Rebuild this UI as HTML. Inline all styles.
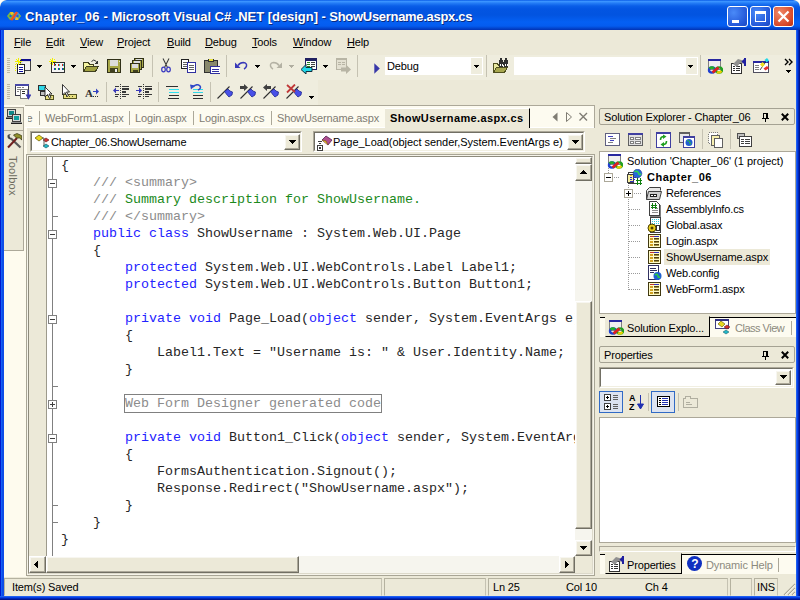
<!DOCTYPE html>
<html><head><meta charset="utf-8"><title>Chapter_06 - Microsoft Visual C# .NET [design]</title>
<style>
*{box-sizing:border-box;margin:0;padding:0}
html,body{width:800px;height:600px;overflow:hidden;background:#fff}
body{position:relative;font-family:"Liberation Sans","DejaVu Sans",sans-serif;font-size:11px;color:#000;letter-spacing:-0.15px}
.abs{position:absolute}
div,span{white-space:nowrap}
#win{position:absolute;left:0;top:0;width:800px;height:600px;background:#ECE9D8;overflow:hidden;border-radius:6px 6px 0 0}
#title{position:absolute;left:0;top:0;width:800px;height:30px;border-radius:7px 7px 0 0;
 background:linear-gradient(#0a5ce8 0,#3a93ff 1.500px,#2078f4 3.500px,#0a5ee8 6px,#0355e2 9px,#0254e0 15px,#0460f4 22px,#045cf0 26px,#0348d2 28px,#0232b4 30px)}
#title .t{position:absolute;left:25px;top:9px;font-weight:bold;font-size:13px;color:#fff;text-shadow:1px 1px 0 #0a2a80;letter-spacing:-0.04px}
.bl{position:absolute;left:0;top:30px;width:4px;height:570px;background:linear-gradient(90deg,#0019cf 0,#0019cf 1px,#1560f5 1px,#1560f5 2px,#0d4de8 2px)}
.br{position:absolute;left:796px;top:30px;width:4px;height:570px;background:linear-gradient(90deg,#2060f0 0,#2060f0 1px,#0540e8 1px,#0540e8 2px,#0028b8 2px,#0028b8 3px,#001590 3px)}
.bb{position:absolute;left:0;top:596px;width:800px;height:4px;background:linear-gradient(#2060f0 0,#2060f0 1px,#0540e8 1px,#0540e8 2px,#0028b8 2px,#0028b8 3px,#001590 3px)}
.cb{position:absolute;top:6px;width:21px;height:21px;border:1px solid #fff;border-radius:3px;background:radial-gradient(circle at 30% 30%,#4a8af8,#2458d8 70%,#1a48c0)}
.cb.x{background:radial-gradient(circle at 30% 30%,#f08868,#d84828 70%,#b83010)}
#menu{position:absolute;left:4px;top:30px;width:792px;height:23px;background:#ECE9D8}
#menu span{position:absolute;top:6px;font-size:11px}
.tb{position:absolute;background:#EFEDDE}
.grip{position:absolute;width:3px;height:16px;background:repeating-linear-gradient(#BDB9A4 0,#BDB9A4 1px,transparent 1px,transparent 2px)}
.sep{position:absolute;width:1px;background:#C5C2B2}
.mono{font-family:"Liberation Mono","DejaVu Sans Mono",monospace}
.combo{position:absolute;background:#fff}
.btn3d{position:absolute;background:#ECE9D8;border:1px solid;border-color:#fff #716F64 #716F64 #fff;box-shadow:inset -1px -1px 0 #ACA899, inset 1px 1px 0 #F7F6F0}
.sunk{position:absolute;border:1px solid;border-color:#ACA899 #fff #fff #ACA899}
.sunk2{position:absolute;border:1px solid;border-color:#716F64 #F1EFE2 #F1EFE2 #716F64}
.ptitle{position:absolute;left:599px;width:196px;height:17px;border:1px solid #A5A293;border-radius:2px;background:#ECE9D8}
.ptitle span{position:absolute;left:4px;top:2px}
.tree span{position:absolute;font-size:11px}
.st{position:absolute;top:578px;height:18px;border:1px solid;border-color:#B5B2A0 #C5C2B2 #ECE9D8 #B5B2A0}
.stt{position:absolute;top:581px}
.code{position:absolute;left:62px;font-family:"Liberation Mono","DejaVu Sans Mono",monospace;font-size:13.333px;line-height:17px;height:17px;white-space:pre;color:#262626;letter-spacing:0}
.k{color:#2222FF}.g{color:#8C8C8C}.c{color:#1C8A1C}
.ob{position:absolute;left:48px;width:9px;height:9px;border:1px solid #808080;background:#fff}
.ob i{position:absolute;left:1px;top:3px;width:5px;height:1px;background:#404040}
.ob b{position:absolute;left:3px;top:1px;width:1px;height:5px;background:#404040}
.tick{position:absolute;left:52px;width:6px;height:1px;background:#808080}
</style></head><body>
<div id="win">
<div id="title"><div class="t"><span style="letter-spacing:0.42px">Chapter_06</span> - Microsoft Visual C# .NET [design] - <span style="letter-spacing:-0.3px">ShowUsername.aspx.cs</span></div>
<svg class="abs" style="left:6px;top:10px" width="16" height="12"><path d="M1 6L4 2H7L9 5L7 10H4Z" fill="#7CB83C"/><path d="M4 2H7L8 4L5 5Z" fill="#F0C020"/><path d="M15 6L12 2H9L7 5L9 10H12Z" fill="#4C90D8"/><path d="M9 10H12L13 8L10 7Z" fill="#F0C020"/><path d="M12 10L15 6L13 4Z" fill="#7CB83C"/><circle cx="4.500" cy="6" r="1.200" fill="#2060D0"/><circle cx="11.500" cy="6" r="1.200" fill="#2060D0"/><path d="M4 10L10 1.500L12 2.500L6.500 10.500Z" fill="#F05020"/></svg>
<div class="cb" style="left:727px"><div class="abs" style="left:4px;top:13px;width:7px;height:3px;background:#fff"></div></div>
<div class="cb" style="left:750px"><div class="abs" style="left:4px;top:4px;width:11px;height:11px;border:1px solid #fff;border-top-width:3px"></div></div>
<div class="cb x" style="left:773px"><svg class="abs" style="left:3px;top:3px" width="13" height="13"><path d="M1.5 1.5L11.5 11.5M11.5 1.5L1.5 11.5" stroke="#fff" stroke-width="2.2"/></svg></div>
</div><div class="bl"></div><div class="br"></div><div class="bb"></div>
<div id="menu">
<span style="left:10px"><u>F</u>ile</span>
<span style="left:42px"><u>E</u>dit</span>
<span style="left:76px"><u>V</u>iew</span>
<span style="left:113px"><u>P</u>roject</span>
<span style="left:163px"><u>B</u>uild</span>
<span style="left:201px"><u>D</u>ebug</span>
<span style="left:248px"><u>T</u>ools</span>
<span style="left:289px"><u>W</u>indow</span>
<span style="left:343px"><u>H</u>elp</span>
</div>
<div class="tb" style="left:5px;top:55px;width:791px;height:25px;border-radius:2px 0 0 0"></div>
<div class="tb" style="left:5px;top:80px;width:313px;height:25px"></div>
<div class="grip" style="left:7px;top:58px"></div><div class="grip" style="left:7px;top:84px"></div>
<svg class="abs" style="left:15px;top:58px" width="16" height="16" viewBox="0 0 16 16" shape-rendering="crispEdges" ><rect x="5" y="1" width="11" height="12" fill="#404040"/><rect x="6" y="2" width="9" height="10" fill="#DCDCDC"/><rect x="5" y="1" width="11" height="2" fill="#10108C"/><rect x="8" y="4" width="7" height="8" fill="#F0F0F0"/><rect x="2" y="6" width="8" height="10" fill="#202020"/><rect x="3" y="7" width="6" height="8" fill="#fff"/><rect x="4" y="9" width="4" height="1" fill="#1010A0"/><rect x="4" y="11" width="4" height="1" fill="#1010A0"/><rect x="4" y="13" width="4" height="1" fill="#1010A0"/><rect x="3" y="0" width="1" height="7" fill="#F0F000"/><rect x="0" y="3" width="7" height="1" fill="#F0F000"/><rect x="1" y="1" width="1" height="1" fill="#F0F000"/><rect x="5" y="1" width="1" height="1" fill="#F0F000"/><rect x="1" y="5" width="1" height="1" fill="#F0F000"/><rect x="5" y="5" width="1" height="1" fill="#F0F000"/><rect x="2" y="2" width="1" height="1" fill="#F0F000"/><rect x="4" y="4" width="1" height="1" fill="#F0F000"/><rect x="0" y="6" width="1" height="1" fill="#F0F000"/><rect x="0" y="8" width="1" height="1" fill="#F0F000"/><rect x="0" y="10" width="1" height="1" fill="#F0F000"/><rect x="0" y="12" width="1" height="1" fill="#F0F000"/></svg>
<svg class="abs" style="left:49px;top:58px" width="16" height="16" viewBox="0 0 16 16" shape-rendering="crispEdges" ><rect x="2" y="4" width="14" height="11" fill="#303030"/><rect x="3" y="5" width="12" height="9" fill="#F4F4F4"/><rect x="5" y="6" width="2" height="2" fill="#D02020"/><rect x="5" y="10" width="2" height="2" fill="#2030D0"/><rect x="9" y="6" width="2" height="2" fill="#D02020"/><rect x="9" y="10" width="2" height="2" fill="#2030D0"/><rect x="13" y="6" width="2" height="2" fill="#D02020"/><rect x="13" y="10" width="2" height="2" fill="#2030D0"/><rect x="6" y="6" width="1" height="2" fill="#20C0C0"/><rect x="6" y="10" width="1" height="2" fill="#20A020"/><rect x="10" y="6" width="1" height="2" fill="#20C0C0"/><rect x="10" y="10" width="1" height="2" fill="#20A020"/><rect x="14" y="6" width="1" height="2" fill="#20C0C0"/><rect x="14" y="10" width="1" height="2" fill="#20A020"/><rect x="3" y="0" width="1" height="7" fill="#F0F000"/><rect x="0" y="3" width="7" height="1" fill="#F0F000"/><rect x="1" y="1" width="1" height="1" fill="#F0F000"/><rect x="5" y="1" width="1" height="1" fill="#F0F000"/><rect x="1" y="5" width="1" height="1" fill="#F0F000"/><rect x="5" y="5" width="1" height="1" fill="#303030"/><rect x="2" y="2" width="1" height="1" fill="#F0F000"/><rect x="4" y="4" width="1" height="1" fill="#303030"/><rect x="6" y="6" width="1" height="1" fill="#303030"/></svg>
<svg class="abs" style="left:83px;top:58px" width="16" height="16" viewBox="0 0 16 16" shape-rendering="crispEdges" ><path d="M0.500 13.500V4.500H5.500L6.500 6.500H10.500V8.500" fill="#F4F4A0" stroke="#404020"/><path d="M0.500 13.500L3.500 8.500H15.500L12.500 13.500Z" fill="#A0A040" stroke="#404020"/><path d="M8.500 3.500Q10.500 0.500 13.500 3.500" fill="none" stroke="#303030" shape-rendering="auto"/><path d="M15 2V5.500H11.500Z" fill="#303030"/></svg>
<svg class="abs" style="left:107px;top:58px" width="16" height="16" viewBox="0 0 16 16" shape-rendering="crispEdges" ><rect x="0" y="1" width="14" height="14" fill="#303018"/><rect x="1" y="2" width="12" height="12" fill="#A8A848"/><rect x="3" y="2" width="8" height="6" fill="#DCDCDC"/><rect x="3" y="10" width="8" height="5" fill="#404020"/><rect x="8" y="11" width="2" height="3" fill="#F0F0F0"/><rect x="12" y="3" width="1" height="1" fill="#E8E8D0"/></svg>
<svg class="abs" style="left:129px;top:58px" width="16" height="16" viewBox="0 0 16 16" shape-rendering="crispEdges" ><rect x="5" y="0" width="10" height="10" fill="#303018"/><rect x="6" y="1" width="8" height="8" fill="#A8A848"/><rect x="7" y="1" width="6" height="4" fill="#DCDCDC"/><rect x="8" y="7" width="5" height="2" fill="#404020"/><rect x="3" y="2" width="10" height="10" fill="#303018"/><rect x="4" y="3" width="8" height="8" fill="#A8A848"/><rect x="5" y="3" width="6" height="4" fill="#DCDCDC"/><rect x="6" y="9" width="5" height="2" fill="#404020"/><rect x="1" y="5" width="10" height="10" fill="#303018"/><rect x="2" y="6" width="8" height="8" fill="#A8A848"/><rect x="3" y="6" width="6" height="4" fill="#DCDCDC"/><rect x="4" y="12" width="5" height="2" fill="#404020"/></svg>
<svg class="abs" style="left:160px;top:58px" width="16" height="16" viewBox="0 0 16 16" shape-rendering="crispEdges" ><g shape-rendering="auto"><path d="M3 0.500L7.500 9.500M9 0.500L4.500 9.500" stroke="#404040" stroke-width="1.100" fill="none"/><ellipse cx="3.500" cy="11.500" rx="1.800" ry="2.300" fill="none" stroke="#3838C0" stroke-width="1.200"/><ellipse cx="8.500" cy="11.500" rx="1.800" ry="2.300" fill="none" stroke="#3838C0" stroke-width="1.200"/></g></svg>
<svg class="abs" style="left:181px;top:58px" width="16" height="16" viewBox="0 0 16 16" shape-rendering="crispEdges" ><rect x="0" y="1" width="8" height="10" fill="#202020"/><rect x="1" y="2" width="6" height="8" fill="#fff"/><rect x="2" y="4" width="4" height="1" fill="#606060"/><rect x="2" y="6" width="4" height="1" fill="#606060"/><rect x="2" y="8" width="4" height="1" fill="#606060"/><rect x="6" y="4" width="9" height="11" fill="#3030A0"/><rect x="7" y="5" width="7" height="9" fill="#fff"/><rect x="8" y="7" width="5" height="1" fill="#606060"/><rect x="8" y="9" width="5" height="1" fill="#606060"/><rect x="8" y="11" width="5" height="1" fill="#606060"/></svg>
<svg class="abs" style="left:204px;top:58px" width="16" height="16" viewBox="0 0 16 16" shape-rendering="crispEdges" ><rect x="0" y="2" width="14" height="13" fill="#303030"/><rect x="1" y="3" width="12" height="11" fill="#88886C"/><rect x="4" y="1" width="6" height="3" fill="#303030"/><rect x="5" y="1" width="4" height="2" fill="#E8E040"/><rect x="6" y="8" width="11" height="8" fill="#3030A0"/><rect x="7" y="9" width="9" height="6" fill="#fff"/><rect x="8" y="11" width="7" height="1" fill="#3030A0"/><rect x="8" y="13" width="7" height="1" fill="#3030A0"/></svg>
<svg class="abs" style="left:235px;top:58px" width="16" height="16" viewBox="0 0 16 16" shape-rendering="crispEdges" ><g shape-rendering="auto" ><path d="M3 7.500Q5 4.500 8.500 4.500Q12 5 11.500 8Q11 10 9 11" fill="none" stroke="#3838B8" stroke-width="1.500"/><path d="M0 4.500V10H5.500Z" fill="#3838B8"/></g></svg>
<svg class="abs" style="left:269px;top:58px" width="16" height="16" viewBox="0 0 16 16" shape-rendering="crispEdges" ><g shape-rendering="auto" transform="translate(13,0) scale(-1,1)"><path d="M3 7.500Q5 4.500 8.500 4.500Q12 5 11.500 8Q11 10 9 11" fill="none" stroke="#B4B2A4" stroke-width="1.500"/><path d="M0 4.500V10H5.500Z" fill="#B4B2A4"/></g></svg>
<svg class="abs" style="left:301px;top:58px" width="16" height="16" viewBox="0 0 16 16" shape-rendering="crispEdges" ><rect x="4" y="0" width="12" height="12" fill="#202060"/><rect x="5" y="3" width="10" height="8" fill="#fff"/><rect x="6" y="4" width="3" height="1" fill="#208020"/><rect x="10" y="4" width="4" height="1" fill="#404040"/><rect x="6" y="6" width="3" height="1" fill="#208020"/><rect x="10" y="6" width="4" height="1" fill="#404040"/><rect x="6" y="8" width="3" height="1" fill="#208020"/><rect x="10" y="8" width="4" height="1" fill="#404040"/><path d="M0 11.5L5 6.5V9.5H11V13.5H5V16Z" fill="#20D8E8" stroke="#103040" stroke-width="1" shape-rendering="auto"/></svg>
<svg class="abs" style="left:335px;top:58px" width="16" height="16" viewBox="0 0 16 16" shape-rendering="crispEdges" ><rect x="1" y="0" width="11" height="12" fill="#B8B5A5"/><rect x="2" y="2" width="9" height="9" fill="#E4E1D2"/><rect x="3" y="4" width="3" height="1" fill="#B8B5A5"/><rect x="7" y="4" width="3" height="1" fill="#B8B5A5"/><rect x="3" y="6" width="3" height="1" fill="#B8B5A5"/><rect x="7" y="6" width="3" height="1" fill="#B8B5A5"/><path d="M16 11.5L11 6.5V9.5H6V13.5H11V16Z" fill="#B8B5A5" shape-rendering="auto"/></svg>
<svg class="abs" style="left:493px;top:58px" width="16" height="16" viewBox="0 0 16 16" shape-rendering="crispEdges" ><path d="M0.5 14.5V5.5H4.5L5.5 7.5H8" fill="#E8E8A0" stroke="#505020"/><path d="M0.5 14.5L3.5 9.5H14.5L11.5 14.5Z" fill="#A8A850" stroke="#505020"/><rect x="6" y="2" width="4" height="7" fill="#303030"/><rect x="11" y="2" width="4" height="7" fill="#303030"/><rect x="7" y="0" width="2" height="2" fill="#303030"/><rect x="12" y="0" width="2" height="2" fill="#303030"/><rect x="10" y="4" width="1" height="3" fill="#303030"/><rect x="7" y="6" width="1" height="2" fill="#fff"/><rect x="9" y="6" width="1" height="2" fill="#fff"/><rect x="12" y="6" width="1" height="2" fill="#fff"/><rect x="14" y="6" width="1" height="2" fill="#fff"/></svg>
<svg class="abs" style="left:707px;top:58px" width="16" height="16" viewBox="0 0 16 16" shape-rendering="crispEdges" ><rect x="1" y="1" width="13" height="11" fill="#808080"/><rect x="2" y="3" width="11" height="8" fill="#F0F0F0"/><rect x="1" y="1" width="13" height="2" fill="#2828A0"/><g shape-rendering="auto" stroke-width="2.400" fill="none"><ellipse cx="5" cy="12" rx="3" ry="2.600" stroke="#2040D0"/><ellipse cx="12" cy="12" rx="3" ry="2.600" stroke="#20A020"/><path d="M2.500 10.500Q5 8.500 7 10.500" stroke="#20B020"/><path d="M10 14Q12.500 15.500 14.500 13" stroke="#E8D000"/><path d="M5.500 14.500L11.500 9.500" stroke="#E02020" stroke-width="2.800"/></g></svg>
<svg class="abs" style="left:730px;top:58px" width="16" height="16" viewBox="0 0 16 16" shape-rendering="crispEdges" ><rect x="1" y="5" width="11" height="11" fill="#303030"/><rect x="2" y="6" width="9" height="9" fill="#fff"/><rect x="3" y="8" width="2" height="1" fill="#303030"/><rect x="6" y="8" width="4" height="1" fill="#303030"/><rect x="3" y="10" width="2" height="1" fill="#303030"/><rect x="6" y="10" width="4" height="1" fill="#303030"/><rect x="3" y="12" width="2" height="1" fill="#303030"/><rect x="6" y="12" width="4" height="1" fill="#303030"/><path d="M3 6L8 1L13 2.500V5.500L10 5L7 9Z" fill="#909090" shape-rendering="auto"/><path d="M14.500 0.500L11.500 3.500L14.500 6.500Z" fill="#2020A0" shape-rendering="auto"/><rect x="14" y="0" width="2" height="8" fill="#2020A0"/></svg>
<svg class="abs" style="left:753px;top:58px" width="16" height="16" viewBox="0 0 16 16" shape-rendering="crispEdges" ><rect x="0" y="3" width="16" height="12" fill="#505060"/><rect x="1" y="5" width="14" height="9" fill="#fff"/><rect x="0" y="3" width="16" height="2" fill="#2828A0"/><rect x="2" y="7" width="4" height="1" fill="#808080"/><rect x="2" y="9" width="4" height="1" fill="#808080"/><rect x="2" y="11" width="4" height="1" fill="#808080"/><g shape-rendering="auto"><path d="M14 2L7 12" stroke="#202020" stroke-width=".8"/><path d="M11.500 2L14 0L16 2.500L13.500 4.500Z" fill="#20D8E8"/><path d="M7 6.500L9.500 4L12 6.500L9.500 9Z" fill="#F0E020"/><path d="M10.500 10.500L14 8L16 10L12.500 12.500Z" fill="#E83030"/></g></svg>
<svg class="abs" style="left:37px;top:65px" width="5" height="3" viewBox="0 0 5 3" shape-rendering="crispEdges" ><rect x="0" y="0" width="5" height="1" fill="#000"/><rect x="1" y="1" width="3" height="1" fill="#000"/><rect x="2" y="2" width="1" height="1" fill="#000"/></svg>
<svg class="abs" style="left:71px;top:65px" width="5" height="3" viewBox="0 0 5 3" shape-rendering="crispEdges" ><rect x="0" y="0" width="5" height="1" fill="#000"/><rect x="1" y="1" width="3" height="1" fill="#000"/><rect x="2" y="2" width="1" height="1" fill="#000"/></svg>
<svg class="abs" style="left:255px;top:65px" width="5" height="3" viewBox="0 0 5 3" shape-rendering="crispEdges" ><rect x="0" y="0" width="5" height="1" fill="#000"/><rect x="1" y="1" width="3" height="1" fill="#000"/><rect x="2" y="2" width="1" height="1" fill="#000"/></svg>
<svg class="abs" style="left:289px;top:65px" width="5" height="3" viewBox="0 0 5 3" shape-rendering="crispEdges" ><rect x="0" y="0" width="5" height="1" fill="#B0AEA0"/><rect x="1" y="1" width="3" height="1" fill="#B0AEA0"/><rect x="2" y="2" width="1" height="1" fill="#B0AEA0"/></svg>
<svg class="abs" style="left:323px;top:65px" width="5" height="3" viewBox="0 0 5 3" shape-rendering="crispEdges" ><rect x="0" y="0" width="5" height="1" fill="#000"/><rect x="1" y="1" width="3" height="1" fill="#000"/><rect x="2" y="2" width="1" height="1" fill="#000"/></svg>
<div class="sep" style="left:152px;top:55px;height:22px"></div>
<div class="sep" style="left:226px;top:55px;height:22px"></div>
<div class="sep" style="left:357px;top:55px;height:22px"></div>
<div class="sep" style="left:486px;top:55px;height:22px"></div>
<div class="sep" style="left:700px;top:55px;height:22px"></div>
<svg class="abs" style="left:374px;top:63px" width="7" height="11"><path d="M0.300 0.300L5.800 5.500L0.300 10.700Z" fill="#3838A8"/></svg>
<div class="combo" style="left:385px;top:57px;width:98px;height:18px"><span class="abs" style="left:2px;top:3px">Debug</span><div class="abs" style="left:86px;top:1px;width:11px;height:16px;background:#EFEDDE"></div></div>
<svg class="abs" style="left:474px;top:65px" width="5" height="3" viewBox="0 0 5 3" shape-rendering="crispEdges" ><rect x="0" y="0" width="5" height="1" fill="#000"/><rect x="1" y="1" width="3" height="1" fill="#000"/><rect x="2" y="2" width="1" height="1" fill="#000"/></svg>
<div class="combo" style="left:514px;top:57px;width:184px;height:18px"><div class="abs" style="left:172px;top:1px;width:11px;height:16px;background:#EFEDDE"></div></div>
<svg class="abs" style="left:688px;top:65px" width="5" height="3" viewBox="0 0 5 3" shape-rendering="crispEdges" ><rect x="0" y="0" width="5" height="1" fill="#000"/><rect x="1" y="1" width="3" height="1" fill="#000"/><rect x="2" y="2" width="1" height="1" fill="#000"/></svg>
<svg class="abs" style="left:784px;top:58px" width="10" height="16" shape-rendering="crispEdges"><path d="M1 1L4 4L1 7M5 1L8 4L5 7" stroke="#000" stroke-width="1.4" fill="none" shape-rendering="auto"/><rect x="2" y="12" width="5" height="1"/><rect x="3" y="13" width="3" height="1"/><rect x="4" y="14" width="1" height="1"/></svg>
<svg class="abs" style="left:15px;top:84px" width="16" height="16" viewBox="0 0 16 16" shape-rendering="crispEdges" ><rect x="0" y="0" width="14" height="12" fill="#383848"/><rect x="1" y="2" width="12" height="9" fill="#fff"/><rect x="0" y="0" width="14" height="2" fill="#4848A8"/><rect x="2" y="3" width="4" height="1" fill="#808080"/><rect x="7" y="3" width="2" height="1" fill="#808080"/><rect x="2" y="5" width="3" height="1" fill="#808080"/><rect x="2" y="7" width="2" height="1" fill="#808080"/><rect x="5" y="5" width="8" height="10" fill="#808080"/><rect x="6" y="6" width="6" height="8" fill="#fff"/><rect x="7" y="7" width="3" height="1" fill="#303030"/><rect x="7" y="9" width="3" height="1" fill="#303030"/><path d="M13.500 6V12M11.500 11L13.500 14.500L15.500 11Z" stroke="#3838B0" fill="#3838B0" stroke-width="1.200" shape-rendering="auto"/></svg>
<svg class="abs" style="left:38px;top:84px" width="16" height="16" viewBox="0 0 16 16" shape-rendering="crispEdges" ><rect x="0" y="1" width="8" height="6" fill="#303030"/><rect x="1" y="2" width="6" height="4" fill="#30D8E8"/><rect x="2" y="7" width="7" height="5" fill="#303030"/><rect x="3" y="8" width="5" height="3" fill="#C0C0C0"/><rect x="7" y="11" width="9" height="5" fill="#505020"/><rect x="8" y="12" width="7" height="3" fill="#E8E080"/><path d="M7 3V13L9.5 10.5L11.5 14.5L13 13.5L11 10H14Z" fill="#fff" stroke="#202020" stroke-width=".9" shape-rendering="auto"/></svg>
<svg class="abs" style="left:61px;top:84px" width="16" height="16" viewBox="0 0 16 16" shape-rendering="crispEdges" ><rect x="2" y="10" width="14" height="5" fill="#505020"/><rect x="3" y="11" width="12" height="3" fill="#E8E080"/><rect x="5" y="12" width="1" height="1" fill="#505020"/><rect x="8" y="12" width="1" height="1" fill="#505020"/><rect x="11" y="12" width="1" height="1" fill="#505020"/><path d="M1.5 0.5V11L4 8.5L6 12.5L7.5 11.5L5.5 8H8.5Z" fill="#fff" stroke="#202020" stroke-width=".9" shape-rendering="auto"/></svg>
<svg class="abs" style="left:85px;top:84px" width="16" height="16" viewBox="0 0 16 16" shape-rendering="crispEdges" ><text x="0" y="13" font-family="Liberation Serif,serif" font-weight="bold" font-size="11" fill="#303030" shape-rendering="auto" letter-spacing="0">A</text><rect x="8" y="7" width="5" height="1" fill="#3040C0"/><path d="M11 4.500L14 7.500L11 10.500Z" fill="#3040C0" shape-rendering="auto"/><rect x="8" y="12" width="1" height="1" fill="#303030"/><rect x="10" y="12" width="1" height="1" fill="#303030"/><rect x="12" y="12" width="1" height="1" fill="#303030"/></svg>
<svg class="abs" style="left:113px;top:84px" width="16" height="16" viewBox="0 0 16 16" shape-rendering="crispEdges" ><rect x="7" y="0" width="1" height="1" fill="#383838"/><rect x="7" y="2" width="1" height="1" fill="#383838"/><rect x="7" y="4" width="1" height="1" fill="#383838"/><rect x="7" y="6" width="1" height="1" fill="#383838"/><rect x="7" y="8" width="1" height="1" fill="#383838"/><rect x="7" y="10" width="1" height="1" fill="#383838"/><rect x="7" y="12" width="1" height="1" fill="#383838"/><rect x="7" y="14" width="1" height="1" fill="#383838"/><rect x="2" y="2" width="4" height="1" fill="#383838"/><rect x="9" y="2" width="7" height="1" fill="#383838"/><rect x="9" y="4" width="7" height="2" fill="#383838"/><rect x="9" y="7" width="4" height="2" fill="#383838"/><rect x="2" y="10" width="4" height="1" fill="#383838"/><rect x="9" y="10" width="7" height="1" fill="#383838"/><rect x="2" y="12" width="3" height="1" fill="#383838"/><rect x="9" y="12" width="4" height="1" fill="#383838"/><rect x="1" y="6" width="5" height="1" fill="#3838B8"/><path d="M3 3.500L0 6.500L3 9.500Z" fill="#3838B8" shape-rendering="auto"/></svg>
<svg class="abs" style="left:136px;top:84px" width="16" height="16" viewBox="0 0 16 16" shape-rendering="crispEdges" ><rect x="7" y="0" width="1" height="1" fill="#383838"/><rect x="7" y="2" width="1" height="1" fill="#383838"/><rect x="7" y="4" width="1" height="1" fill="#383838"/><rect x="7" y="6" width="1" height="1" fill="#383838"/><rect x="7" y="8" width="1" height="1" fill="#383838"/><rect x="7" y="10" width="1" height="1" fill="#383838"/><rect x="7" y="12" width="1" height="1" fill="#383838"/><rect x="7" y="14" width="1" height="1" fill="#383838"/><rect x="2" y="2" width="4" height="1" fill="#383838"/><rect x="9" y="2" width="7" height="1" fill="#383838"/><rect x="9" y="4" width="7" height="2" fill="#383838"/><rect x="9" y="7" width="4" height="2" fill="#383838"/><rect x="2" y="10" width="4" height="1" fill="#383838"/><rect x="9" y="10" width="7" height="1" fill="#383838"/><rect x="2" y="12" width="3" height="1" fill="#383838"/><rect x="9" y="12" width="4" height="1" fill="#383838"/><rect x="0" y="6" width="5" height="1" fill="#3838B8"/><path d="M3 3.500L6 6.500L3 9.500Z" fill="#3838B8" shape-rendering="auto"/></svg>
<svg class="abs" style="left:166px;top:84px" width="16" height="16" viewBox="0 0 16 16" shape-rendering="crispEdges" ><rect x="0" y="2" width="12" height="1" fill="#303030"/><rect x="3" y="5" width="10" height="1" fill="#30E0F0"/><rect x="3" y="8" width="10" height="1" fill="#30E0F0"/><rect x="3" y="11" width="10" height="1" fill="#303030"/><rect x="2" y="14" width="11" height="1" fill="#303030"/></svg>
<svg class="abs" style="left:189px;top:84px" width="16" height="16" viewBox="0 0 16 16" shape-rendering="crispEdges" ><rect x="4" y="5" width="10" height="1" fill="#30D8E8"/><rect x="4" y="8" width="10" height="1" fill="#30D8E8"/><rect x="4" y="11" width="10" height="1" fill="#303030"/><rect x="4" y="14" width="10" height="1" fill="#303030"/><g shape-rendering="auto"><path d="M4 3Q8 -1 11 2Q12.5 4.5 9 6" fill="none" stroke="#3048C8" stroke-width="1.5"/><path d="M1 0.5L6 1.5L2 5.5Z" fill="#3048C8"/></g></svg>
<svg class="abs" style="left:217px;top:84px" width="16" height="16" viewBox="0 0 16 16" shape-rendering="crispEdges" ><g shape-rendering="auto"><path d="M0.500 14.500L12.500 2.500" stroke="#303030" stroke-width="1.100"/><path d="M7.500 7.500L11 5L13 7L15.500 8L15 11L12 13L10.500 11.500Z" fill="#4850E8" stroke="#202890" stroke-width=".8"/></g></svg>
<svg class="abs" style="left:240px;top:84px" width="16" height="16" viewBox="0 0 16 16" shape-rendering="crispEdges" ><g shape-rendering="auto"><path d="M0.500 14.500L12.500 2.500" stroke="#303030" stroke-width="1.100"/><path d="M7.500 7.500L11 5L13 7L15.500 8L15 11L12 13L10.500 11.500Z" fill="#4850E8" stroke="#202890" stroke-width=".8"/><path d="M0 2H4V0L8 3.500L4 7V5H0Z" fill="#404040"/></g></svg>
<svg class="abs" style="left:263px;top:84px" width="16" height="16" viewBox="0 0 16 16" shape-rendering="crispEdges" ><g shape-rendering="auto"><path d="M0.500 14.500L12.500 2.500" stroke="#303030" stroke-width="1.100"/><path d="M7.500 7.500L11 5L13 7L15.500 8L15 11L12 13L10.500 11.500Z" fill="#4850E8" stroke="#202890" stroke-width=".8"/><path d="M8 2H4V0L0 3.500L4 7V5H8Z" fill="#404040"/></g></svg>
<svg class="abs" style="left:286px;top:84px" width="16" height="16" viewBox="0 0 16 16" shape-rendering="crispEdges" ><g shape-rendering="auto"><path d="M0.500 14.500L12.500 2.500" stroke="#303030" stroke-width="1.100"/><path d="M7.500 7.500L11 5L13 7L15.500 8L15 11L12 13L10.500 11.500Z" fill="#4850E8" stroke="#202890" stroke-width=".8"/><path d="M1 1L9 8M9 0.500L1 8.500" stroke="#C03838" stroke-width="1.800"/></g></svg>
<div class="sep" style="left:106px;top:82px;height:20px"></div>
<div class="sep" style="left:158px;top:82px;height:20px"></div>
<div class="sep" style="left:210px;top:82px;height:20px"></div>
<svg class="abs" style="left:309px;top:96px" width="5" height="3" viewBox="0 0 5 3" shape-rendering="crispEdges" ><rect x="0" y="0" width="5" height="1" fill="#000"/><rect x="1" y="1" width="3" height="1" fill="#000"/><rect x="2" y="2" width="1" height="1" fill="#000"/></svg>
<div class="abs" style="left:4px;top:105px;width:23px;height:472px;background:#FEFBEE"></div>
<div class="abs" style="left:4px;top:107px;width:20px;height:144px;background:#ECE9D8;border:1px solid #ACA899;border-left:0"></div>
<div class="abs" style="left:4px;top:130px;width:19px;height:1px;background:#ACA899"></div>
<svg class="abs" style="left:6px;top:109px" width="16" height="16" viewBox="0 0 16 16" shape-rendering="crispEdges" ><rect x="1" y="0" width="9" height="8" fill="#404040"/><rect x="2" y="1" width="7" height="6" fill="#D8D8D8"/><rect x="3" y="2" width="5" height="4" fill="#108888"/><rect x="0" y="8" width="11" height="2" fill="#808080"/><rect x="0" y="9" width="11" height="1" fill="#202020"/><rect x="6" y="5" width="9" height="8" fill="#404040"/><rect x="7" y="6" width="7" height="6" fill="#D8D8D8"/><rect x="8" y="7" width="5" height="4" fill="#10A0A0"/><rect x="5" y="13" width="11" height="2" fill="#909090"/><rect x="5" y="14" width="11" height="1" fill="#202020"/></svg>
<svg class="abs" style="left:6px;top:133px" width="16" height="16" viewBox="0 0 16 16" shape-rendering="crispEdges" ><g shape-rendering="auto"><path d="M14.500 14.500L5 5.500" stroke="#585858" stroke-width="2.200"/><path d="M1.500 2.500Q1 6 4.500 6.500L6 5L4 4.500L3.500 2.500L5 1.500Q3 0.500 1.500 2.500Z" fill="#484848"/><path d="M2 14.500L11 5" stroke="#702020" stroke-width="2"/><path d="M7.500 2L11 0.500L15.500 2.500L16 7L13.500 5L10.500 5Z" fill="#90902C" stroke="#303010" stroke-width=".7"/></g></svg>
<div class="abs" style="left:6px;top:156px;width:14px;height:44px;writing-mode:vertical-rl;font-size:11px;color:#6E6C5E;line-height:14px;letter-spacing:0.25px">Toolbox</div>
<div class="abs" style="left:25px;top:105px;width:570px;height:23px;background:#FDFBF0;border-top:1px solid #ACA899;border-right:1px solid #ACA899"></div>
<div class="abs" style="left:25px;top:127px;width:569px;height:1px;background:#fff"></div>
<div class="abs" style="left:385px;top:108px;width:145px;height:20px;background:#ECE9D8;border-right:1px solid #000;border-top:1px solid #fff"></div>
<div class="abs" style="left:28px;top:112px;width:6px;height:14px;overflow:hidden"><span class="abs tabt" style="left:-1.500px;top:0;color:#7F7C73">e</span></div>
<span class="abs tabt" style="left:45px;top:112px;color:#7F7C73">WebForm1.aspx</span>
<span class="abs tabt" style="left:135px;top:112px;color:#7F7C73">Login.aspx</span>
<span class="abs tabt" style="left:199px;top:112px;color:#7F7C73">Login.aspx.cs</span>
<span class="abs tabt" style="left:277px;top:112px;color:#7F7C73">ShowUsername.aspx</span>
<div class="abs" style="left:39px;top:111px;width:1px;height:14px;background:#ACA899"></div>
<div class="abs" style="left:129px;top:111px;width:1px;height:14px;background:#ACA899"></div>
<div class="abs" style="left:193px;top:111px;width:1px;height:14px;background:#ACA899"></div>
<div class="abs" style="left:271px;top:111px;width:1px;height:14px;background:#ACA899"></div>
<span class="abs tabt" style="left:390px;top:112px;font-weight:bold;letter-spacing:0.38px">ShowUsername.aspx.cs</span>
<svg class="abs" style="left:551px;top:112px" width="40" height="10"><path d="M6.5 0.5V9.5L1.5 5Z" fill="#7F7C73"/><path d="M15.5 0.5V9.5L20.5 5Z" fill="none" stroke="#7F7C73"/><path d="M28.5 1L36 8.5M36 1L28.5 8.5" stroke="#7F7C73" stroke-width="1.4"/></svg>
<div class="abs" style="left:30px;top:131px;width:272px;height:21px;background:#fff;border:1px solid;border-color:#ACA899 #fff #fff #ACA899"><div class="abs" style="left:0;top:0;right:0;bottom:0;border:1px solid;border-color:#716F64 #F1EFE2 #F1EFE2 #716F64"></div><div class="btn3d" style="right:1px;top:2px;width:16px;height:16px"></div></div><svg class="abs" style="left:289px;top:140px" width="7" height="4" viewBox="0 0 7 4" shape-rendering="crispEdges" ><rect x="0" y="0" width="7" height="1" fill="#000"/><rect x="1" y="1" width="5" height="1" fill="#000"/><rect x="2" y="2" width="3" height="1" fill="#000"/><rect x="3" y="3" width="1" height="1" fill="#000"/></svg>
<div class="abs" style="left:313px;top:131px;width:272px;height:21px;background:#fff;border:1px solid;border-color:#ACA899 #fff #fff #ACA899"><div class="abs" style="left:0;top:0;right:0;bottom:0;border:1px solid;border-color:#716F64 #F1EFE2 #F1EFE2 #716F64"></div><div class="btn3d" style="right:1px;top:2px;width:16px;height:16px"></div></div><svg class="abs" style="left:572px;top:140px" width="7" height="4" viewBox="0 0 7 4" shape-rendering="crispEdges" ><rect x="0" y="0" width="7" height="1" fill="#000"/><rect x="1" y="1" width="5" height="1" fill="#000"/><rect x="2" y="2" width="3" height="1" fill="#000"/><rect x="3" y="3" width="1" height="1" fill="#000"/></svg>
<svg class="abs" style="left:34px;top:134px" width="16" height="16" viewBox="0 0 16 16" shape-rendering="crispEdges" ><g shape-rendering="auto"><path d="M1 4L5 1L9 4L5 7Z" fill="#E8D820" stroke="#605000" stroke-width=".7"/><path d="M9 6L12 4L15 6L12 8Z" fill="#D03030" stroke="#601010" stroke-width=".6"/><path d="M9 12L12 10L15 12L12 14Z" fill="#20B8C8" stroke="#105060" stroke-width=".6"/><path d="M8 4H10V12" fill="none" stroke="#606060"/></g></svg>
<span class="abs" style="left:51px;top:136px">Chapter_06.ShowUsername</span>
<svg class="abs" style="left:317px;top:135px" width="16" height="16" viewBox="0 0 16 16" shape-rendering="crispEdges" ><g shape-rendering="auto"><path d="M5 5L9 1L15 5L11 10Z" fill="#B05090" stroke="#401040" stroke-width=".7"/><path d="M5 5L9 6L11 10" fill="#E8C030" stroke="#604000" stroke-width=".5"/></g><rect x="1" y="6" width="4" height="1" fill="#404040"/><rect x="2" y="8" width="2" height="1" fill="#404040"/><rect x="0" y="10" width="6" height="6" fill="#404040"/><rect x="1" y="11" width="4" height="4" fill="#fff"/><rect x="2" y="12" width="2" height="2" fill="#404040"/></svg>
<span class="abs" style="left:333px;top:136px;letter-spacing:-0.05px">Page_Load(object sender,System.EventArgs e)</span>
<div class="abs" style="left:26px;top:154px;width:569px;height:422px;border:1px solid #A8A595;background:#F6F4EA"></div>
<div class="abs" style="left:28px;top:156px;width:565px;height:418px;border:1px solid;border-color:#8E8B7C #DCD9CA #DCD9CA #8E8B7C;background:#fff"></div>
<div class="abs" style="left:29px;top:157px;width:17px;height:399px;background:#ECE9D8"></div>
<div class="abs" style="left:46px;top:157px;width:1px;height:399px;background:#9D9A8C"></div>
<div class="abs" style="left:52px;top:157px;width:1px;height:399px;background:#808080"></div>
<div class="abs" style="left:29px;top:157px;width:546px;height:399px;overflow:hidden">
<div class="code" style="left:32px;top:0px">{</div>
<div class="code" style="left:64px;top:17px"><span class="g">/// &lt;summary&gt;</span></div>
<div class="code" style="left:64px;top:34px"><span class="g">/// </span><span class="c">Summary description for ShowUsername.</span></div>
<div class="code" style="left:64px;top:51px"><span class="g">/// &lt;/summary&gt;</span></div>
<div class="code" style="left:64px;top:68px"><span class="k">public</span> <span class="k">class</span> ShowUsername : System.Web.UI.Page</div>
<div class="code" style="left:64px;top:85px">{</div>
<div class="code" style="left:96px;top:102px"><span class="k">protected</span> System.Web.UI.WebControls.Label Label1;</div>
<div class="code" style="left:96px;top:119px"><span class="k">protected</span> System.Web.UI.WebControls.Button Button1;</div>
<div class="code" style="left:96px;top:153px"><span class="k">private</span> <span class="k">void</span> Page_Load(<span class="k">object</span> sender, System.EventArgs e)</div>
<div class="code" style="left:96px;top:170px">{</div>
<div class="code" style="left:128px;top:187px">Label1.Text = "Username is: " &amp; User.Identity.Name;</div>
<div class="code" style="left:96px;top:204px">}</div>
<div class="code" style="left:96px;top:238px"><span class="g" style="display:inline-block;height:17px;line-height:17px;outline:1px solid #808080;outline-offset:0px;vertical-align:top">Web Form Designer generated code</span></div>
<div class="code" style="left:96px;top:272px"><span class="k">private</span> <span class="k">void</span> Button1_Click(<span class="k">object</span> sender, System.EventArgs e)</div>
<div class="code" style="left:96px;top:289px">{</div>
<div class="code" style="left:128px;top:306px">FormsAuthentication.Signout();</div>
<div class="code" style="left:128px;top:323px">Response.Redirect("ShowUsername.aspx");</div>
<div class="code" style="left:96px;top:340px">}</div>
<div class="code" style="left:64px;top:357px">}</div>
<div class="code" style="left:32px;top:374px">}</div>
</div>
<div class="ob" style="top:179px"><i></i></div>
<div class="ob" style="top:230px"><i></i></div>
<div class="ob" style="top:315px"><i></i></div>
<div class="ob" style="top:400px"><i></i><b></b></div>
<div class="ob" style="top:434px"><i></i></div>
<div class="tick" style="top:216px"></div>
<div class="tick" style="top:386px"></div>
<div class="tick" style="top:505px"></div>
<div class="tick" style="top:522px"></div>
<div class="abs" style="left:575px;top:157px;width:17px;height:399px;background:#F6F5EE"></div>
<div class="btn3d" style="left:575px;top:157px;width:17px;height:7px"></div>
<div class="btn3d" style="left:575px;top:164px;width:17px;height:17px"></div>
<svg class="abs" style="left:580px;top:170px" width="7" height="4" shape-rendering="crispEdges"><rect x="3" y="0" width="1" height="1"/><rect x="2" y="1" width="3" height="1"/><rect x="1" y="2" width="5" height="1"/><rect x="0" y="3" width="7" height="1"/></svg>
<div class="btn3d" style="left:575px;top:301px;width:17px;height:228px"></div>
<div class="btn3d" style="left:575px;top:540px;width:17px;height:16px"></div>
<svg class="abs" style="left:580px;top:546px" width="7" height="4" shape-rendering="crispEdges"><rect x="0" y="0" width="7" height="1"/><rect x="1" y="1" width="5" height="1"/><rect x="2" y="2" width="3" height="1"/><rect x="3" y="3" width="1" height="1"/></svg>
<div class="abs" style="left:29px;top:556px;width:546px;height:17px;background:#F6F5EE"></div>
<div class="btn3d" style="left:29px;top:556px;width:17px;height:17px"></div>
<svg class="abs" style="left:34px;top:561px" width="4" height="7" shape-rendering="crispEdges"><rect x="3" y="0" width="1" height="7"/><rect x="2" y="1" width="1" height="5"/><rect x="1" y="2" width="1" height="3"/><rect x="0" y="3" width="1" height="1"/></svg>
<div class="btn3d" style="left:46px;top:556px;width:253px;height:17px"></div>
<div class="btn3d" style="left:559px;top:556px;width:16px;height:17px"></div>
<svg class="abs" style="left:565px;top:561px" width="4" height="7" shape-rendering="crispEdges"><rect x="0" y="0" width="1" height="7"/><rect x="1" y="1" width="1" height="5"/><rect x="2" y="2" width="1" height="3"/><rect x="3" y="3" width="1" height="1"/></svg>
<div class="abs" style="left:575px;top:556px;width:17px;height:17px;background:#ECE9D8"></div>
<div class="ptitle" style="top:108px"><span>Solution Explorer - Chapter_06</span></div><svg class="abs" style="left:762px;top:113px" width="7" height="9" viewBox="0 0 7 9" shape-rendering="crispEdges" ><rect x="1" y="0" width="4" height="1" fill="#000"/><rect x="1" y="0" width="1" height="5" fill="#000"/><rect x="4" y="0" width="2" height="5" fill="#000"/><rect x="0" y="5" width="7" height="1" fill="#000"/><rect x="3" y="6" width="1" height="3" fill="#000"/></svg><svg class="abs" style="left:781px;top:113px" width="8" height="8"><path d="M0.800 0.800L7.200 7.200M7.200 0.800L0.800 7.200" stroke="#000" stroke-width="2"/></svg>
<svg class="abs" style="left:605px;top:132px" width="16" height="16" viewBox="0 0 16 16" shape-rendering="crispEdges" ><rect x="0" y="1" width="15" height="13" fill="#606080"/><rect x="1" y="2" width="13" height="11" fill="#fff"/><rect x="3" y="4" width="5" height="1" fill="#4040C0"/><rect x="5" y="6" width="6" height="1" fill="#808080"/><rect x="5" y="8" width="4" height="1" fill="#4040C0"/><rect x="3" y="10" width="5" height="1" fill="#808080"/></svg>
<svg class="abs" style="left:628px;top:132px" width="16" height="16" viewBox="0 0 16 16" shape-rendering="crispEdges" ><rect x="0" y="1" width="15" height="13" fill="#606060"/><rect x="1" y="3" width="13" height="10" fill="#E0E0E0"/><rect x="0" y="1" width="15" height="2" fill="#4040A0"/><rect x="2" y="5" width="4" height="3" fill="#808080"/><rect x="7" y="5" width="6" height="3" fill="#808080"/><rect x="2" y="9" width="4" height="3" fill="#808080"/><rect x="7" y="9" width="6" height="3" fill="#808080"/><rect x="3" y="6" width="2" height="1" fill="#fff"/><rect x="8" y="6" width="4" height="1" fill="#fff"/><rect x="3" y="10" width="2" height="1" fill="#fff"/><rect x="8" y="10" width="4" height="1" fill="#fff"/></svg>
<div class="sep" style="left:650px;top:129px;height:20px"></div>
<svg class="abs" style="left:656px;top:132px" width="16" height="16" viewBox="0 0 16 16" shape-rendering="crispEdges" ><rect x="0" y="0" width="15" height="16" fill="#4040A0"/><rect x="1" y="2" width="13" height="13" fill="#fff"/><g shape-rendering="auto" fill="none" stroke="#20A020" stroke-width="1.6"><path d="M4.5 8Q4.5 4.5 8 4.5"/><path d="M10.500 9Q10.500 12.500 7 12.500"/></g><path d="M7 2.500L10.500 4.500L7 7Z" fill="#20A020" shape-rendering="auto"/><path d="M8 10L4.500 12.500L8 15Z" fill="#20A020" shape-rendering="auto"/></svg>
<svg class="abs" style="left:679px;top:132px" width="16" height="16" viewBox="0 0 16 16" shape-rendering="crispEdges" ><rect x="0" y="0" width="11" height="11" fill="#606060"/><rect x="1" y="2" width="9" height="8" fill="#E8E8E8"/><rect x="4" y="4" width="12" height="12" fill="#4040A0"/><rect x="5" y="6" width="10" height="9" fill="#fff"/><circle cx="10" cy="10.500" r="3.500" fill="#2060D0" shape-rendering="auto"/><path d="M8 9Q10 8 11 10Q10 12 12 12" stroke="#30C040" fill="none" shape-rendering="auto"/></svg>
<div class="sep" style="left:702px;top:129px;height:20px"></div>
<svg class="abs" style="left:708px;top:132px" width="16" height="16" viewBox="0 0 16 16" shape-rendering="crispEdges" ><rect x="0.500" y="0.500" width="9" height="11" fill="#fff" stroke="#808080" stroke-dasharray="1 1"/><rect x="3" y="3" width="9" height="11" fill="#606060"/><rect x="4" y="4" width="7" height="9" fill="#F8F0B0"/><rect x="6" y="6" width="9" height="10" fill="#606060"/><rect x="7" y="7" width="7" height="8" fill="#fff"/></svg>
<div class="sep" style="left:730px;top:129px;height:20px"></div>
<svg class="abs" style="left:737px;top:132px" width="16" height="16" viewBox="0 0 16 16" shape-rendering="crispEdges" ><rect x="0" y="1" width="8" height="6" fill="#505050"/><rect x="1" y="2" width="6" height="4" fill="#C0C0C0"/><rect x="2" y="4" width="13" height="11" fill="#404040"/><rect x="3" y="5" width="11" height="9" fill="#fff"/><rect x="4" y="7" width="3" height="1" fill="#404040"/><rect x="8" y="7" width="5" height="1" fill="#404040"/><rect x="4" y="9" width="3" height="1" fill="#404040"/><rect x="8" y="9" width="5" height="1" fill="#404040"/><rect x="4" y="11" width="3" height="1" fill="#404040"/><rect x="8" y="11" width="5" height="1" fill="#404040"/></svg>
<div class="abs" style="left:599px;top:151px;width:197px;height:163px;background:#fff;border:1px solid #ACA899"></div>
<div class="abs" style="left:608px;top:168px;width:1px;height:5px;background:repeating-linear-gradient(#9A9A9A 0,#9A9A9A 1px,transparent 1px,transparent 2px)"></div>
<div class="abs" style="left:614px;top:177px;width:6px;height:1px;background:repeating-linear-gradient(90deg,#9A9A9A 0,#9A9A9A 1px,transparent 1px,transparent 2px)"></div>
<div class="abs" style="left:628px;top:185px;width:1px;height:105px;background:repeating-linear-gradient(#9A9A9A 0,#9A9A9A 1px,transparent 1px,transparent 2px)"></div>
<div class="abs" style="left:634px;top:193px;width:7px;height:1px;background:repeating-linear-gradient(90deg,#9A9A9A 0,#9A9A9A 1px,transparent 1px,transparent 2px)"></div>
<div class="abs" style="left:629px;top:209px;width:12px;height:1px;background:repeating-linear-gradient(90deg,#9A9A9A 0,#9A9A9A 1px,transparent 1px,transparent 2px)"></div>
<div class="abs" style="left:629px;top:225px;width:12px;height:1px;background:repeating-linear-gradient(90deg,#9A9A9A 0,#9A9A9A 1px,transparent 1px,transparent 2px)"></div>
<div class="abs" style="left:629px;top:241px;width:12px;height:1px;background:repeating-linear-gradient(90deg,#9A9A9A 0,#9A9A9A 1px,transparent 1px,transparent 2px)"></div>
<div class="abs" style="left:629px;top:257px;width:12px;height:1px;background:repeating-linear-gradient(90deg,#9A9A9A 0,#9A9A9A 1px,transparent 1px,transparent 2px)"></div>
<div class="abs" style="left:629px;top:273px;width:12px;height:1px;background:repeating-linear-gradient(90deg,#9A9A9A 0,#9A9A9A 1px,transparent 1px,transparent 2px)"></div>
<div class="abs" style="left:629px;top:289px;width:12px;height:1px;background:repeating-linear-gradient(90deg,#9A9A9A 0,#9A9A9A 1px,transparent 1px,transparent 2px)"></div>
<div class="abs" style="left:604px;top:173px;width:9px;height:9px;border:1px solid #ACA899;background:#fff"><div class="abs" style="left:1px;top:3px;width:5px;height:1px;background:#000"></div></div>
<div class="abs" style="left:624px;top:189px;width:9px;height:9px;border:1px solid #ACA899;background:#fff"><div class="abs" style="left:1px;top:3px;width:5px;height:1px;background:#000"></div><div class="abs" style="left:3px;top:1px;width:1px;height:5px;background:#000"></div></div>
<div class="abs" style="left:664px;top:249px;width:106px;height:16px;background:#ECE9D8"></div>
<svg class="abs" style="left:607px;top:153px" width="16" height="16" viewBox="0 0 16 16" shape-rendering="crispEdges" ><rect x="1" y="1" width="13" height="11" fill="#808080"/><rect x="2" y="3" width="11" height="8" fill="#F0F0F0"/><rect x="1" y="1" width="13" height="2" fill="#2828A0"/><g shape-rendering="auto" stroke-width="2.400" fill="none"><ellipse cx="5" cy="12" rx="3" ry="2.600" stroke="#2040D0"/><ellipse cx="12" cy="12" rx="3" ry="2.600" stroke="#20A020"/><path d="M2.500 10.500Q5 8.500 7 10.500" stroke="#20B020"/><path d="M10 14Q12.500 15.500 14.500 13" stroke="#E8D000"/><path d="M5.500 14.500L11.500 9.500" stroke="#E02020" stroke-width="2.800"/></g></svg>
<svg class="abs" style="left:627px;top:169px" width="16" height="16" viewBox="0 0 16 16" shape-rendering="crispEdges" ><rect x="1" y="3" width="10" height="12" fill="#404040"/><rect x="2" y="4" width="8" height="10" fill="#fff"/><rect x="0" y="5" width="7" height="9" fill="#404040"/><rect x="1" y="6" width="5" height="7" fill="#F8F0A0"/><rect x="3" y="6" width="2" height="1" fill="#E0C020"/><rect x="6" y="6" width="3" height="1" fill="#3030C0"/><rect x="3" y="8" width="2" height="1" fill="#3030C0"/><rect x="6" y="8" width="3" height="1" fill="#3030C0"/><rect x="3" y="10" width="2" height="1" fill="#3030C0"/><rect x="6" y="10" width="2" height="1" fill="#3030C0"/><rect x="3" y="12" width="4" height="1" fill="#3030C0"/><circle cx="10.500" cy="4.500" r="4.300" fill="#2868D8" stroke="#183890" stroke-width=".6" shape-rendering="auto"/><path d="M7.500 3Q10 1 11.500 4Q12 6.500 14 5" stroke="#30D850" fill="none" stroke-width="1.600" shape-rendering="auto"/><rect x="10" y="9" width="1" height="7" fill="#108010"/><rect x="13" y="9" width="1" height="7" fill="#108010"/><rect x="9" y="11" width="6" height="1" fill="#108010"/><rect x="9" y="14" width="6" height="1" fill="#108010"/></svg>
<svg class="abs" style="left:646px;top:185px" width="16" height="16" viewBox="0 0 16 16" shape-rendering="crispEdges" ><g shape-rendering="auto"><path d="M0.500 14.500V5.500L3.500 2.500H14.500V5.500" fill="#E8E8E8" stroke="#404040"/><path d="M0.500 14.500L2.500 6.500H15.500L13.500 14.500Z" fill="#D0D0D0" stroke="#404040"/></g><rect x="4" y="9" width="7" height="3" fill="#202020"/><rect x="5" y="10" width="2" height="1" fill="#fff"/><rect x="8" y="10" width="2" height="1" fill="#fff"/></svg>
<svg class="abs" style="left:647px;top:201px" width="16" height="16" viewBox="0 0 16 16" shape-rendering="crispEdges" ><path d="M2.500 0.500H9.500L12.500 3.500V14.500H2.500Z" fill="#fff" stroke="#404040"/><rect x="13" y="4" width="1" height="12" fill="#808080"/><rect x="3" y="15" width="11" height="1" fill="#808080"/><rect x="8" y="7" width="3" height="1" fill="#909090"/><rect x="5" y="9" width="6" height="1" fill="#909090"/><rect x="5" y="11" width="6" height="1" fill="#909090"/><rect x="5" y="2" width="1" height="6" fill="#108010"/><rect x="8" y="2" width="1" height="6" fill="#108010"/><rect x="4" y="4" width="6" height="1" fill="#108010"/><rect x="4" y="6" width="6" height="1" fill="#108010"/></svg>
<svg class="abs" style="left:647px;top:217px" width="16" height="16" viewBox="0 0 16 16" shape-rendering="crispEdges" ><rect x="3" y="0" width="11" height="16" fill="#404040"/><rect x="4" y="1" width="9" height="14" fill="#fff"/><rect x="5" y="2" width="1" height="1" fill="#30D0E0"/><rect x="7" y="2" width="1" height="1" fill="#30D0E0"/><rect x="9" y="2" width="1" height="1" fill="#30D0E0"/><rect x="11" y="2" width="1" height="1" fill="#30D0E0"/><rect x="5" y="4" width="1" height="1" fill="#30D0E0"/><rect x="7" y="4" width="1" height="1" fill="#30D0E0"/><rect x="9" y="4" width="1" height="1" fill="#30D0E0"/><rect x="11" y="4" width="1" height="1" fill="#30D0E0"/><rect x="5" y="6" width="1" height="1" fill="#30D0E0"/><rect x="7" y="6" width="1" height="1" fill="#30D0E0"/><rect x="9" y="6" width="1" height="1" fill="#30D0E0"/><rect x="11" y="6" width="1" height="1" fill="#30D0E0"/><rect x="5" y="8" width="1" height="1" fill="#30D0E0"/><rect x="7" y="8" width="1" height="1" fill="#30D0E0"/><rect x="9" y="8" width="1" height="1" fill="#30D0E0"/><rect x="11" y="8" width="1" height="1" fill="#30D0E0"/><rect x="5" y="10" width="1" height="1" fill="#30D0E0"/><rect x="7" y="10" width="1" height="1" fill="#30D0E0"/><rect x="9" y="10" width="1" height="1" fill="#30D0E0"/><rect x="11" y="10" width="1" height="1" fill="#30D0E0"/><rect x="5" y="12" width="1" height="1" fill="#30D0E0"/><rect x="7" y="12" width="1" height="1" fill="#30D0E0"/><rect x="9" y="12" width="1" height="1" fill="#30D0E0"/><rect x="11" y="12" width="1" height="1" fill="#30D0E0"/><g shape-rendering="auto"><circle cx="5" cy="11" r="4" fill="#E8D020" stroke="#504000"/><circle cx="5" cy="11" r="1.500" fill="#504000"/></g><rect x="9" y="8" width="4" height="6" fill="#303030"/><rect x="10" y="9" width="2" height="4" fill="#fff"/></svg>
<svg class="abs" style="left:647px;top:233px" width="16" height="16" viewBox="0 0 16 16" shape-rendering="crispEdges" ><rect x="1" y="1" width="13" height="14" fill="#403810"/><rect x="2" y="2" width="11" height="12" fill="#FFFBC8"/><rect x="3" y="3" width="4" height="1" fill="#C03030"/><rect x="7" y="3" width="5" height="1" fill="#3030C0"/><rect x="3" y="5" width="3" height="2" fill="#D0A020"/><rect x="7" y="5" width="5" height="1" fill="#504010"/><rect x="3" y="8" width="3" height="2" fill="#D0A020"/><rect x="7" y="8" width="5" height="1" fill="#504010"/><rect x="3" y="11" width="3" height="2" fill="#D0A020"/><rect x="7" y="11" width="5" height="1" fill="#504010"/><rect x="7" y="6" width="5" height="1" fill="#A09040"/><rect x="7" y="9" width="5" height="1" fill="#A09040"/><rect x="7" y="12" width="5" height="1" fill="#A09040"/></svg>
<svg class="abs" style="left:647px;top:249px" width="16" height="16" viewBox="0 0 16 16" shape-rendering="crispEdges" ><rect x="1" y="1" width="13" height="14" fill="#403810"/><rect x="2" y="2" width="11" height="12" fill="#FFFBC8"/><rect x="3" y="3" width="4" height="1" fill="#C03030"/><rect x="7" y="3" width="5" height="1" fill="#3030C0"/><rect x="3" y="5" width="3" height="2" fill="#D0A020"/><rect x="7" y="5" width="5" height="1" fill="#504010"/><rect x="3" y="8" width="3" height="2" fill="#D0A020"/><rect x="7" y="8" width="5" height="1" fill="#504010"/><rect x="3" y="11" width="3" height="2" fill="#D0A020"/><rect x="7" y="11" width="5" height="1" fill="#504010"/><rect x="7" y="6" width="5" height="1" fill="#A09040"/><rect x="7" y="9" width="5" height="1" fill="#A09040"/><rect x="7" y="12" width="5" height="1" fill="#A09040"/></svg>
<svg class="abs" style="left:647px;top:265px" width="16" height="16" viewBox="0 0 16 16" shape-rendering="crispEdges" ><rect x="1" y="0" width="11" height="15" fill="#303060"/><rect x="2" y="1" width="9" height="13" fill="#fff"/><rect x="3" y="3" width="6" height="1" fill="#303060"/><rect x="3" y="5" width="7" height="1" fill="#303060"/><rect x="3" y="7" width="4" height="1" fill="#303060"/><circle cx="10.500" cy="11" r="4" fill="#2060D0" shape-rendering="auto"/><path d="M8 10Q10 8 11 11Q11 13 13 12" stroke="#30D040" fill="none" stroke-width="1.500" shape-rendering="auto"/></svg>
<svg class="abs" style="left:647px;top:281px" width="16" height="16" viewBox="0 0 16 16" shape-rendering="crispEdges" ><rect x="1" y="1" width="13" height="14" fill="#403810"/><rect x="2" y="2" width="11" height="12" fill="#FFFBC8"/><rect x="3" y="3" width="4" height="1" fill="#C03030"/><rect x="7" y="3" width="5" height="1" fill="#3030C0"/><rect x="3" y="5" width="3" height="2" fill="#D0A020"/><rect x="7" y="5" width="5" height="1" fill="#504010"/><rect x="3" y="8" width="3" height="2" fill="#D0A020"/><rect x="7" y="8" width="5" height="1" fill="#504010"/><rect x="3" y="11" width="3" height="2" fill="#D0A020"/><rect x="7" y="11" width="5" height="1" fill="#504010"/><rect x="7" y="6" width="5" height="1" fill="#A09040"/><rect x="7" y="9" width="5" height="1" fill="#A09040"/><rect x="7" y="12" width="5" height="1" fill="#A09040"/></svg>
<div class="tree">
<span style="left:627px;top:155px;letter-spacing:-0.02px">Solution 'Chapter_06' (1 project)</span>
<span style="left:647px;top:171px;font-weight:bold;letter-spacing:0.5px">Chapter_06</span>
<span style="left:666px;top:187px;">References</span>
<span style="left:666px;top:203px;">AssemblyInfo.cs</span>
<span style="left:666px;top:219px;">Global.asax</span>
<span style="left:666px;top:235px;">Login.aspx</span>
<span style="left:666px;top:251px;">ShowUsername.aspx</span>
<span style="left:666px;top:267px;">Web.config</span>
<span style="left:666px;top:283px;">WebForm1.aspx</span>
</div>
<div class="abs" style="left:600px;top:317px;width:196px;height:20px;background:#FDFBF0;border-top:1px solid #000"></div><div class="abs" style="left:605px;top:316px;width:105px;height:21px;background:#ECE9D8;border:1px solid;border-color:#ECE9D8 #000 #000 #ECE9D8"></div><svg class="abs" style="left:608px;top:319px" width="16" height="16" viewBox="0 0 16 16" shape-rendering="crispEdges" ><rect x="1" y="1" width="13" height="11" fill="#808080"/><rect x="2" y="3" width="11" height="8" fill="#F0F0F0"/><rect x="1" y="1" width="13" height="2" fill="#2828A0"/><g shape-rendering="auto" stroke-width="2.400" fill="none"><ellipse cx="5" cy="12" rx="3" ry="2.600" stroke="#2040D0"/><ellipse cx="12" cy="12" rx="3" ry="2.600" stroke="#20A020"/><path d="M2.500 10.500Q5 8.500 7 10.500" stroke="#20B020"/><path d="M10 14Q12.500 15.500 14.500 13" stroke="#E8D000"/><path d="M5.500 14.500L11.500 9.500" stroke="#E02020" stroke-width="2.800"/></g></svg><span class="abs" style="left:627px;top:322px">Solution Explo...</span><svg class="abs" style="left:715px;top:319px" width="16" height="16" viewBox="0 0 16 16" shape-rendering="crispEdges" ><g shape-rendering="auto"><rect x="0.500" y="0.500" width="13" height="9" fill="#fff" stroke="#404080"/><path d="M3 5L6 2L10 5L7 8Z" fill="#E8D820" stroke="#605000" stroke-width=".6"/><path d="M9 8L12 6L15 8L12 10Z" fill="#D03030" stroke="#601010" stroke-width=".5"/><path d="M8 13L11 11L14 13L11 15Z" fill="#20B8C8" stroke="#105060" stroke-width=".5"/></g><rect x="0" y="0" width="14" height="2" fill="#303080"/></svg><span class="abs" style="left:735px;top:322px;color:#8C8A7E;letter-spacing:-0.5px">Class View</span><div class="abs" style="left:791px;top:321px;width:1px;height:14px;background:#ACA899"></div>
<div class="ptitle" style="top:346px"><span>Properties</span></div><svg class="abs" style="left:762px;top:351px" width="7" height="9" viewBox="0 0 7 9" shape-rendering="crispEdges" ><rect x="1" y="0" width="4" height="1" fill="#000"/><rect x="1" y="0" width="1" height="5" fill="#000"/><rect x="4" y="0" width="2" height="5" fill="#000"/><rect x="0" y="5" width="7" height="1" fill="#000"/><rect x="3" y="6" width="1" height="3" fill="#000"/></svg><svg class="abs" style="left:781px;top:351px" width="8" height="8"><path d="M0.800 0.800L7.200 7.200M7.200 0.800L0.800 7.200" stroke="#000" stroke-width="2"/></svg>
<div class="abs" style="left:599px;top:367px;width:195px;height:21px;background:#fff;border:1px solid;border-color:#ACA899 #fff #fff #ACA899"><div class="abs" style="left:0;top:0;right:0;bottom:0;border:1px solid;border-color:#716F64 #F1EFE2 #F1EFE2 #716F64"></div><div class="btn3d" style="right:2px;top:2px;width:16px;height:15px"></div></div>
<svg class="abs" style="left:780px;top:375px" width="7" height="4" viewBox="0 0 7 4" shape-rendering="crispEdges" ><rect x="0" y="0" width="7" height="1" fill="#000"/><rect x="1" y="1" width="5" height="1" fill="#000"/><rect x="2" y="2" width="3" height="1" fill="#000"/><rect x="3" y="3" width="1" height="1" fill="#000"/></svg>
<div class="abs" style="left:599px;top:391px;width:24px;height:22px;background:#DCE3F1;border:1px solid #316AC5"></div>
<svg class="abs" style="left:604px;top:394px" width="16" height="16" viewBox="0 0 16 16" shape-rendering="crispEdges" ><rect x="0" y="0" width="7" height="7" fill="#404040"/><rect x="1" y="1" width="5" height="5" fill="#fff"/><rect x="2" y="3" width="3" height="1" fill="#000"/><rect x="3" y="2" width="1" height="3" fill="#000"/><rect x="0" y="9" width="7" height="7" fill="#404040"/><rect x="1" y="10" width="5" height="5" fill="#fff"/><rect x="2" y="12" width="3" height="1" fill="#000"/><rect x="3" y="11" width="1" height="3" fill="#000"/><rect x="9" y="1" width="5" height="1" fill="#606060"/><rect x="9" y="3" width="5" height="1" fill="#606060"/><rect x="9" y="5" width="5" height="1" fill="#606060"/><rect x="9" y="10" width="5" height="1" fill="#606060"/><rect x="9" y="12" width="5" height="1" fill="#606060"/><rect x="9" y="14" width="5" height="1" fill="#606060"/></svg>
<svg class="abs" style="left:629px;top:393px" width="16" height="18"><text x="0" y="8" font-family="Liberation Sans,sans-serif" font-weight="bold" font-size="9" fill="#000">A</text><text x="0" y="17" font-family="Liberation Sans,sans-serif" font-weight="bold" font-size="9" fill="#000">Z</text><path d="M11.500 2V13M8.500 11L11.500 16L14.500 11Z" stroke="#2030B0" fill="#2030B0"/></svg>
<div class="sep" style="left:648px;top:393px;height:18px"></div>
<div class="abs" style="left:651px;top:391px;width:24px;height:22px;background:#DCE3F1;border:1px solid #316AC5"></div>
<svg class="abs" style="left:657px;top:396px" width="13" height="11" viewBox="0 0 13 11" shape-rendering="crispEdges" ><rect x="0" y="0" width="13" height="11" fill="#000"/><rect x="1" y="1" width="11" height="9" fill="#fff"/><rect x="2" y="2" width="2" height="1" fill="#000"/><rect x="5" y="2" width="6" height="1" fill="#2030B0"/><rect x="2" y="4" width="2" height="1" fill="#000"/><rect x="5" y="4" width="6" height="1" fill="#2030B0"/><rect x="2" y="6" width="2" height="1" fill="#000"/><rect x="5" y="6" width="6" height="1" fill="#2030B0"/><rect x="2" y="8" width="2" height="1" fill="#000"/><rect x="5" y="8" width="6" height="1" fill="#2030B0"/></svg>
<div class="sep" style="left:678px;top:393px;height:18px"></div>
<svg class="abs" style="left:683px;top:395px" width="16" height="16" viewBox="0 0 16 16" shape-rendering="crispEdges" ><rect x="0" y="3" width="15" height="10" fill="#B0AEA0"/><rect x="1" y="4" width="13" height="8" fill="#ECE9D8"/><rect x="2" y="1" width="6" height="3" fill="#B0AEA0"/><rect x="3" y="2" width="4" height="2" fill="#ECE9D8"/><rect x="3" y="7" width="4" height="1" fill="#B0AEA0"/><rect x="3" y="9" width="6" height="1" fill="#B0AEA0"/></svg>
<div class="abs" style="left:599px;top:417px;width:197px;height:126px;background:#fff;border:1px solid #ACA899"></div>
<div class="abs" style="left:599px;top:546px;width:197px;height:6px;border:1px solid;border-color:#ACA899 #fff #fff #ACA899"></div>
<div class="abs" style="left:600px;top:554px;width:196px;height:20px;background:#FDFBF0;border-top:1px solid #000"></div><div class="abs" style="left:605px;top:553px;width:77px;height:21px;background:#ECE9D8;border:1px solid;border-color:#ECE9D8 #000 #000 #ECE9D8"></div><svg class="abs" style="left:608px;top:556px" width="16" height="16" viewBox="0 0 16 16" shape-rendering="crispEdges" ><rect x="1" y="5" width="11" height="11" fill="#303030"/><rect x="2" y="6" width="9" height="9" fill="#fff"/><rect x="3" y="8" width="2" height="1" fill="#303030"/><rect x="6" y="8" width="4" height="1" fill="#303030"/><rect x="3" y="10" width="2" height="1" fill="#303030"/><rect x="6" y="10" width="4" height="1" fill="#303030"/><rect x="3" y="12" width="2" height="1" fill="#303030"/><rect x="6" y="12" width="4" height="1" fill="#303030"/><path d="M3 6L8 1L13 2.500V5.500L10 5L7 9Z" fill="#909090" shape-rendering="auto"/><path d="M14.500 0.500L11.500 3.500L14.500 6.500Z" fill="#2020A0" shape-rendering="auto"/><rect x="14" y="0" width="2" height="8" fill="#2020A0"/></svg><span class="abs" style="left:627px;top:559px">Properties</span><svg class="abs" style="left:687px;top:556px" width="16" height="16" viewBox="0 0 16 16" shape-rendering="crispEdges" ><g shape-rendering="auto"><circle cx="7.500" cy="7.500" r="7.500" fill="#1030C0"/><text x="4.300" y="12" font-family="Liberation Sans,sans-serif" font-weight="bold" font-size="12" fill="#fff">?</text></g></svg><span class="abs" style="left:706px;top:559px;color:#8C8A7E;letter-spacing:-0.15px">Dynamic Help</span><div class="abs" style="left:778px;top:558px;width:1px;height:14px;background:#ACA899"></div>
<div class="st" style="left:4px;width:378px"></div>
<div class="st" style="left:384px;width:102px"></div>
<div class="st" style="left:488px;width:240px"></div>
<div class="st" style="left:730px;width:22px"></div>
<div class="st" style="left:754px;width:24px"></div>
<span class="stt" style="left:12px">Item(s) Saved</span>
<span class="stt" style="left:493px">Ln 25</span>
<span class="stt" style="left:566px">Col 10</span>
<span class="stt" style="left:645px">Ch 4</span>
<span class="stt" style="left:757px">INS</span>
<svg class="abs" style="left:783px;top:583px" width="13" height="13"><path d="M12 1L1 12M12 5L5 12M12 9L9 12" stroke="#ACA899" stroke-width="1.2"/><path d="M12 2L2 12M12 6L6 12M12 10L10 12" stroke="#F8F6EC" stroke-width="0.800"/></svg>
</div>
</body></html>
